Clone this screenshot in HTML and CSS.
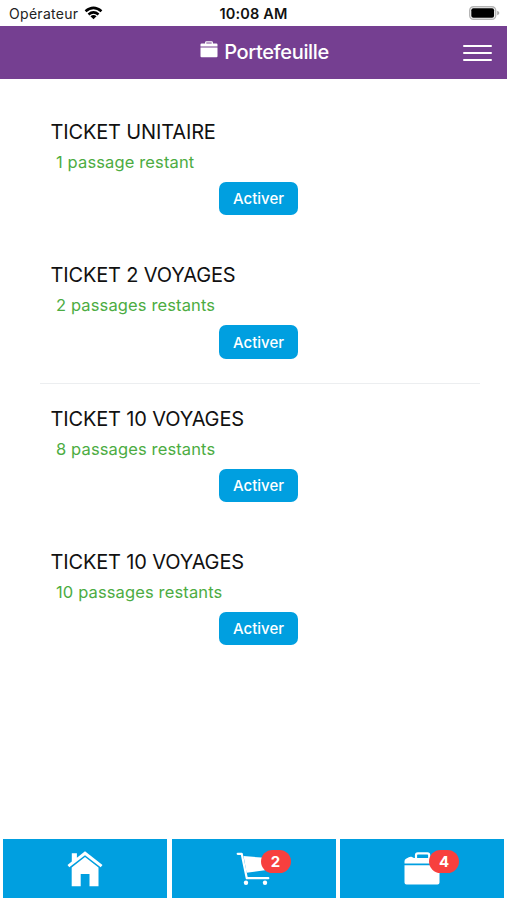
FILE: index.html
```html
<!DOCTYPE html>
<html lang="fr">
<head>
<meta charset="utf-8">
<title>Portefeuille</title>
<link rel="stylesheet" href="styles.css">
</head>
<body>
<div class="status">
  <div class="carrier"><span>Opérateur</span>
    <svg class="wifi" viewBox="0 0 20 14"><g fill="none" stroke="#000" stroke-width="2.7"><path d="M1.6 5.2Q10-2 18.4 5.2"/><path d="M4.7 8.5Q10 4.2 15.3 8.5"/></g><path d="M6.8 10.4Q10 7.9 13.2 10.4L10 13.7Z"/></svg>
  </div>
  <time class="clock">10:08 AM</time>
  <svg class="battery" viewBox="0 0 31 14"><rect x=".7" y=".7" width="26" height="12.6" rx="3.8" fill="#fff" stroke="#b5b5b5" stroke-width="1.4"/><rect x="2.3" y="2.3" width="22.8" height="9.4" rx="2"/><path d="M28.2 4.7Q30.4 5.5 30.4 7T28.2 9.3Z" fill="#a9a9a9"/></svg>
</div>
<header class="header">
  <h1 class="heading">
    <svg class="case" viewBox="0 0 18 17"><path fill="none" stroke="#fff" stroke-width="1.2" d="M5.7 3V1.4Q5.7.8 6.4.8h5.2q.7 0 .7.6V3"/><path fill="#fff" d="M1.6 2.4h14.8q1.1 0 1.1 1.1v2.1H.5V3.5q0-1.1 1.1-1.1ZM.5 6.4h17v8.8q0 1.1-1.1 1.1H1.6q-1.1 0-1.1-1.1Z"/></svg>
    <span>Portefeuille</span>
  </h1>
  <button class="menu" aria-label="Menu"><i></i><i></i><i></i></button>
</header>
<main class="tickets">
  <section class="ticket"><h2>TICKET UNITAIRE</h2><p>1 passage restant</p><button class="activate">Activer</button></section>
  <section class="ticket ruled"><h2>TICKET 2 VOYAGES</h2><p>2 passages restants</p><button class="activate">Activer</button></section>
  <section class="ticket"><h2>TICKET 10 VOYAGES</h2><p>8 passages restants</p><button class="activate">Activer</button></section>
  <section class="ticket"><h2>TICKET 10 VOYAGES</h2><p>10 passages restants</p><button class="activate">Activer</button></section>
</main>
<nav class="tabs">
  <a class="tab"><svg class="icon" viewBox="0 0 36 36"><path fill="#fff" d="M4.8 2.2h5.1v4.6L18 .3 35.5 14l-1.8 2.3L18 4.2 2.3 16.3.5 14l4.3-3.5ZM18 6l13.5 10.4V35.3h-9V23h-8.8v12.3h-9V16.4Z"/></svg></a>
  <a class="tab"><svg class="icon" viewBox="0 0 36 36"><path fill="#fff" d="M7.5 5 29 6.8V19.2L10.6 21.8Z"/><path fill="none" stroke="#fff" stroke-width="2.2" stroke-linecap="round" stroke-linejoin="round" d="M1.7 2.8H5.7L10.8 27.2H32.3"/><circle cx="10" cy="31.8" r="2.2" fill="#fff"/><circle cx="29" cy="31.8" r="2.2" fill="#fff"/></svg><b class="badge">2</b></a>
  <a class="tab"><svg class="icon" viewBox="0 0 36 36"><path fill="none" stroke="#fff" stroke-width="2.2" d="M12 8V4.2q0-1.8 1.8-1.8h9.6q1.8 0 1.8 1.8V8"/><path fill="#fff" d="M.5 12.5V10.2Q.5 8.5 2 7.8L4.8 6.2Q6 5.5 7.5 5.8L10 7H34q1.5 0 1.5 1.7v3.8ZM.5 14.2h35v17.3q0 2-2 2h-31q-2 0-2-2Z"/></svg><b class="badge">4</b></a>
</nav>
</body>
</html>
```
FILE: styles.css
```css
* { box-sizing: border-box; }
body {
  margin: 0;
  height: 900px;
  display: flex;
  flex-direction: column;
  overflow: hidden;
  background: #fff;
  color: #111;
  font-family: Inter, "Liberation Sans", sans-serif;
}
button { border: 0; font: inherit; color: inherit; }
.status {
  flex: none;
  height: 25.5px;
  padding: 1px 7px 0 9px;
  display: grid;
  grid-template-columns: 1fr auto 1fr;
  align-items: center;
  color: #222;
  font-size: 14px;
}
.carrier { display: flex; align-items: center; gap: 6px; letter-spacing: .3px; }
.wifi { width: 19px; height: 14px; }
.clock { margin-right: 2px; font-size: 14.5px; font-weight: 600; letter-spacing: .15px; color: #111; }
.battery { width: 31px; height: 14px; justify-self: end; }
.header {
  flex: none;
  height: 53.5px;
  padding: 0 15px 0 66px;
  display: flex;
  align-items: center;
  background: #753f91;
  color: #fff;
}
.heading {
  flex: 1;
  margin: 0;
  display: flex;
  justify-content: center;
  align-items: center;
  gap: 6px;
  font-size: 20px;
  font-weight: 500;
  letter-spacing: -.35px;
}
.case { width: 18px; height: 17px; margin-bottom: 6px; }
.menu {
  width: 29px;
  padding: 1px 0 0;
  display: grid;
  gap: 5px;
  background: none;
}
.menu i { height: 2px; border-radius: 1px; background: #fff; }
.tickets { flex: 1; padding: 18.3px 27px 0 40px; }
.ticket {
  height: 143.33px;
  padding: 22.7px 11px 0;
  display: flex;
  flex-direction: column;
}
.ruled { border-bottom: 1.5px solid #eceef0; }
.ticket h2 {
  margin: 0 0 0 -.5px;
  line-height: 24px;
  font-size: 20px;
  font-weight: 400;
  letter-spacing: -.15px;
}
.ticket p {
  margin: 8px 0 9px 5px;
  line-height: 21px;
  font-size: 16.5px;
  letter-spacing: .13px;
  color: #4cac42;
}
.activate {
  align-self: center;
  width: 79px;
  height: 33.5px;
  margin-right: 3px;
  padding: 0;
  border-radius: 7px;
  background: #009fe0;
  color: #fff;
  font-size: 15px;
  font-weight: 500;
}
.tabs {
  flex: none;
  height: 61px;
  padding: 0 3px 2px;
  display: grid;
  grid-template-columns: repeat(3, 1fr);
  gap: 4.5px;
}
.tab {
  position: relative;
  display: flex;
  justify-content: center;
  align-items: center;
  background: #009fe0;
}
.icon { width: 36px; height: 36px; }
.badge {
  position: absolute;
  left: calc(50% + 7px);
  top: 11px;
  width: 30px;
  height: 23px;
  border-radius: 12px;
  background: #f7403e;
  color: #fff;
  font-size: 15px;
  line-height: 23px;
  text-align: center;
}
```
